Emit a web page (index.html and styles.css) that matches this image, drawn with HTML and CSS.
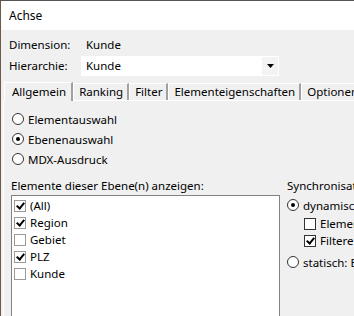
FILE: index.html
```html
<!DOCTYPE html>
<html lang="de">
<head>
    <meta charset="UTF-8">
    <title>Achse</title>
    <link rel="stylesheet" href="styles.css">
</head>
<body>
    <div class="window">
        <div class="titlebar">Achse</div>
        <div class="content">
            <div class="field-row">
                <span class="label">Dimension:</span>
                <span class="value">Kunde</span>
            </div>
            <div class="field-row">
                <span class="label">Hierarchie:</span>
                <div class="combo">
                    <span class="combo-text">Kunde</span>
                    <span class="combo-btn">
                        <svg width="7" height="4" viewBox="0 0 7 4"><path d="M0 0h7L3.5 4z" fill="#000"/></svg>
                    </span>
                </div>
            </div>

            <div class="tabs">
                <div class="tab active">Allgemein</div>
                <div class="tab">Ranking</div>
                <div class="tab">Filter</div>
                <div class="tab">Elementeigenschaften</div>
                <div class="tab">Optionen</div>
            </div>

            <div class="panel">
                <div class="radio-group">
                    <label class="opt"><span class="radio"></span>Elementauswahl</label>
                    <label class="opt"><span class="radio on"></span>Ebenenauswahl</label>
                    <label class="opt"><span class="radio"></span>MDX-Ausdruck</label>
                </div>

                <div class="lower">
                    <div class="list-col">
                        <div class="caption">Elemente dieser Ebene(n) anzeigen:</div>
                        <div class="listbox">
                            <div class="item"><span class="check on"></span>(All)</div>
                            <div class="item"><span class="check on"></span>Region</div>
                            <div class="item"><span class="check"></span>Gebiet</div>
                            <div class="item"><span class="check on"></span>PLZ</div>
                            <div class="item"><span class="check"></span>Kunde</div>
                        </div>
                    </div>
                    <div class="sync-col">
                        <div class="caption">Synchronisation</div>
                        <div class="opt"><span class="radio on"></span>dynamisch</div>
                        <div class="opt sub"><span class="check box"></span>Elemente</div>
                        <div class="opt sub"><span class="check box on"></span>Filterelemente</div>
                        <div class="opt gap"><span class="radio"></span>statisch: Bereich</div>
                    </div>
                </div>
            </div>
        </div>
    </div>
</body>
</html>
```

FILE: styles.css
```css
html,
body {
    margin: 0;
    padding: 0;
    overflow: hidden;
}

body {
    width: 354px;
    height: 316px;
    font-family: 'Noto Sans', 'Liberation Sans', sans-serif;
    font-size: 11.5px;
    color: #000;
    background-color: #f0f0f0;
}

.window {
    height: 316px;
    border-left: 1px solid #6b5a4a;
    border-top: 1px solid #555;
    box-sizing: border-box;
    background-color: #f0f0f0;
    overflow: hidden;
}

.titlebar {
    height: 29px;
    padding-left: 8px;
    line-height: 30px;
    font-size: 12px;
    background-color: #fff;
}

.content {
    padding-top: 4px;
}

.field-row {
    display: flex;
    align-items: center;
    height: 21px;
    padding-left: 8px;
}

.label {
    width: 72px;
}

.value {
    padding-left: 5px;
}

.combo {
    display: flex;
    align-items: center;
    width: 198px;
    height: 20px;
    background-color: #fff;
    box-sizing: border-box;
}

.combo-text {
    flex: 1;
    padding-left: 5px;
}

.combo-btn {
    display: flex;
    align-items: center;
    justify-content: center;
    width: 16px;
    height: 18px;
    margin-right: 1px;
    background-color: #f3f3f3;
}

/* Reiter */
.tabs {
    display: flex;
    align-items: flex-end;
    height: 19px;
    margin-top: 5px;
    padding-left: 3px;
}

.tab {
    height: 16px;
    padding: 0 4px 0 5px;
    line-height: 16px;
    border-top: 1px solid #fff;
    border-left: 1px solid #fff;
    border-right: 2px solid #a0a0a0;
    white-space: nowrap;
    flex-shrink: 0;
}

.tab.active {
    height: 18px;
    line-height: 18px;
    padding: 0 5px 0 7px;
    margin-bottom: -1px;
    position: relative;
    background-color: #f0f0f0;
}

.panel {
    margin-left: 2px;
    border-top: 1px solid #fff;
    border-left: 1px solid #fff;
    height: 220px;
}

.radio-group {
    padding: 8px 0 0 8px;
}

.opt {
    display: flex;
    align-items: center;
    height: 20px;
    white-space: nowrap;
}

.radio {
    flex-shrink: 0;
    width: 12px;
    height: 12px;
    margin-right: 4px;
    border: 1px solid #333;
    border-radius: 50%;
    box-sizing: border-box;
    background-color: #fff;
    display: flex;
    align-items: center;
    justify-content: center;
}

.radio.on::after {
    content: '';
    width: 4px;
    height: 4px;
    border-radius: 50%;
    background-color: #000;
}

.lower {
    display: flex;
    margin-top: 9px;
}

.list-col {
    flex: 0 0 276px;
    padding-left: 7px;
    box-sizing: border-box;
}

.caption {
    height: 16px;
    line-height: 16px;
    white-space: nowrap;
}

.listbox {
    margin-top: 1px;
    height: 130px;
    border: 1px solid #828282;
    background-color: #fff;
    box-sizing: border-box;
    padding-top: 1px;
}

.item {
    display: flex;
    align-items: center;
    height: 17px;
    padding-left: 2px;
}

.check {
    flex-shrink: 0;
    width: 12px;
    height: 12px;
    margin-right: 4px;
    border: 1px solid #9a9a9a;
    box-sizing: border-box;
    background-color: #fff;
    position: relative;
}

.check.box {
    border-color: #333;
}

.check.on::after {
    content: '';
    position: absolute;
    left: 3px;
    top: 0px;
    width: 3px;
    height: 6px;
    border-right: 2px solid #000;
    border-bottom: 2px solid #000;
    transform: rotate(40deg);
}

.sync-col {
    flex: 0 0 auto;
    padding-left: 7px;
}

.sync-col .caption {
    margin-bottom: 1px;
}

.opt.sub {
    padding-left: 17px;
    height: 17px;
}

.opt.gap {
    margin-top: 3px;
}
```
